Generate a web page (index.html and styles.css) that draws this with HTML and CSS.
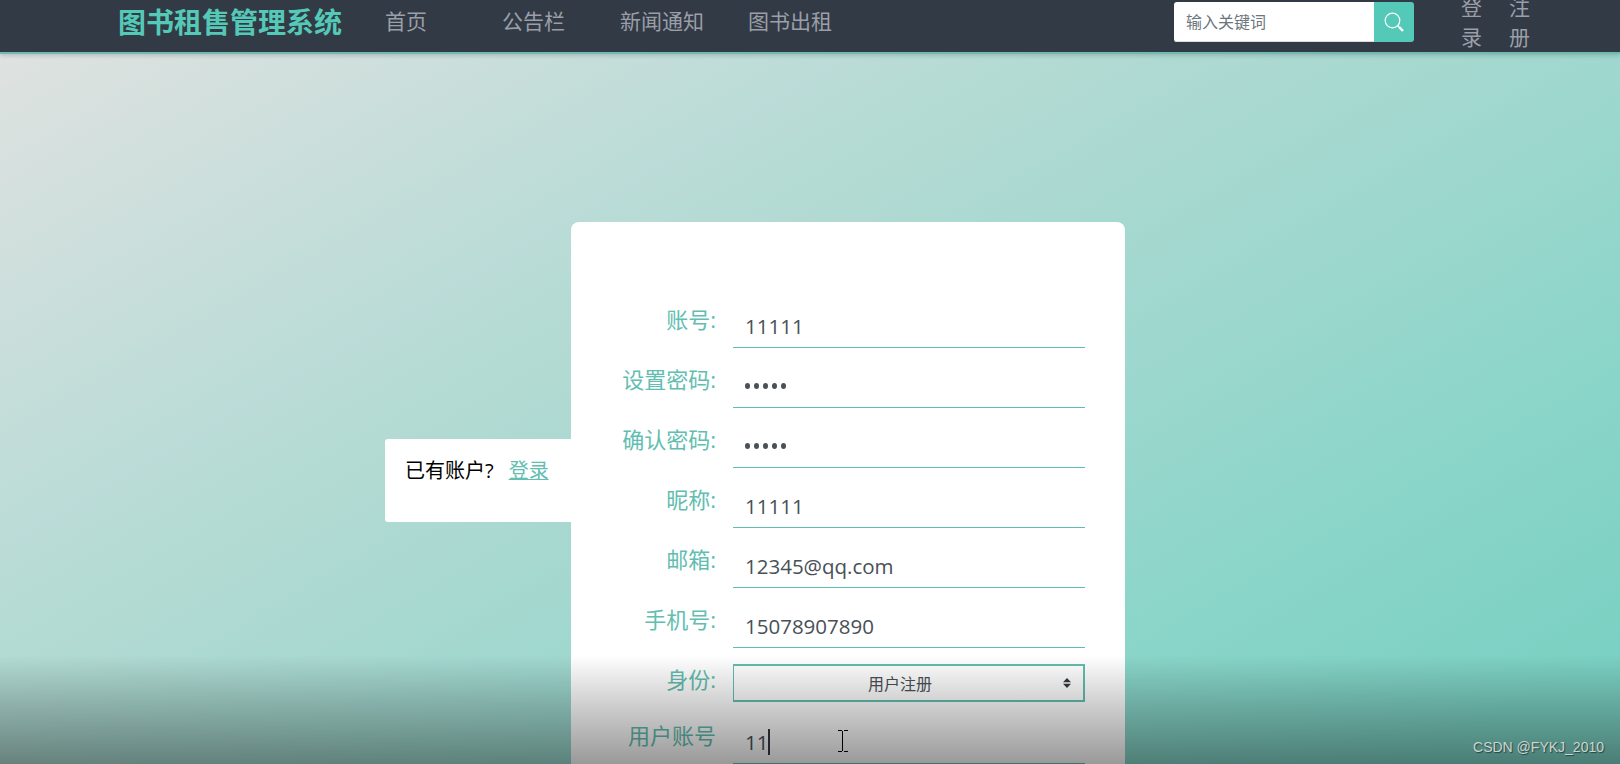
FILE: index.html
```
<!DOCTYPE html>
<html lang="zh-CN">
<head>
  <meta charset="UTF-8" />
  <meta name="viewport" content="width=device-width, initial-scale=1.0"/>
  <title>图书租售管理系统</title>
  <link rel="stylesheet" href="styles.css">
</head>
<body>

  <header class="top-bar">
    <a class="logo" href="#">图书租售管理系统</a>
    <nav class="menu">
      <a class="item-home" href="#">首页</a>
      <a class="item-board" href="#">公告栏</a>
      <a class="item-news" href="#">新闻通知</a>
      <a href="#">图书出租</a>
    </nav>
    <div class="search">
      <input type="text" placeholder="输入关键词">
      <button type="button" aria-label="搜索">
        <svg width="20" height="20" viewBox="0 0 20 20" fill="none" stroke="#fff">
          <circle cx="8.5" cy="8.5" r="7.3" stroke-width="1.2"/>
          <path d="M13.6 13.6L15.4 15.4" stroke-width="1.4"/>
          <path d="M15.2 15.2L19 19" stroke-width="2.4"/>
        </svg>
      </button>
    </div>
    <div class="user-links">
      <a href="#">登录</a>
      <a href="#">注册</a>
    </div>
  </header>

  <main>
    <div class="login-tip">
      <span>已有账户?</span>
      <a href="#">登录</a>
    </div>

    <form class="card">
      <div class="row">
        <label>账号:</label>
        <div class="field">11111</div>
      </div>
      <div class="row">
        <label>设置密码:</label>
        <div class="field password"><i></i><i></i><i></i><i></i><i></i></div>
      </div>
      <div class="row">
        <label>确认密码:</label>
        <div class="field password"><i></i><i></i><i></i><i></i><i></i></div>
      </div>
      <div class="row">
        <label>昵称:</label>
        <div class="field">11111</div>
      </div>
      <div class="row">
        <label>邮箱:</label>
        <div class="field">12345@qq.com</div>
      </div>
      <div class="row">
        <label>手机号:</label>
        <div class="field">15078907890</div>
      </div>
      <div class="row row-select">
        <label>身份:</label>
        <div class="select">
          <span>用户注册</span>
          <svg width="8" height="10" viewBox="0 0 8 10" fill="#343a40">
            <path d="M4 0L8 4.2H0zM4 10L0 5.8H8z"/>
          </svg>
        </div>
      </div>
      <div class="row row-last">
        <label>用户账号</label>
        <div class="field">11<span class="caret"></span></div>
      </div>
    </form>
  </main>

  <div class="shade"></div>
  <svg class="cursor" width="10" height="22" viewBox="0 0 10 22" fill="none" stroke="#000">
    <path d="M0 .5H4M6 .5H10M4.5 1V21M0 21.5H4M6 21.5H10"/>
  </svg>
  <div class="watermark">CSDN @FYKJ_2010</div>

</body>
</html>
```

FILE: styles.css
```
* { box-sizing: border-box; }
html, body {
  margin: 0; padding: 0;
  height: 764px;
  overflow: hidden;
}
body {
  position: relative;
  font-family: 'Open Sans', 'Noto Sans CJK SC', sans-serif;
  color: #495057;
  background: linear-gradient(150deg, #e0e2e0 2%, #bcdcd8 31%, #b2dad3 40%, #9bd7cd 62%, #8bd5c9 76%, #7bd1c3 93%);
}
a { text-decoration: none; }

/* header */
.top-bar {
  height: 54px;
  display: flex;
  align-items: flex-start;
  padding-left: 118px;
  background-color: #323a45;
  border-bottom: 2px solid #6fbab1;
  box-shadow: 0 2px 4px rgba(0, 0, 0, 0.15);
}
.logo {
  width: 267px;
  font-size: 28px;
  font-weight: bold;
  line-height: 44px;
  color: #55c9b7;
}
.menu {
  width: 789px;
  display: flex;
}
.menu a {
  font-size: 21px;
  line-height: 43px;
  color: #9a9fa8;
}
.item-home { width: 117px; }
.item-board { width: 118px; }
.item-news { width: 128px; }
.search {
  display: flex;
  width: 240px;
  height: 40px;
  margin-top: 2px;
  border-radius: 3px;
  overflow: hidden;
}
.search input {
  width: 200px;
  padding: 0 12px;
  border: none;
  border-bottom: 1px solid #ddd;
  font-family: inherit;
  font-size: 16px;
}
.search input::placeholder { color: #6c757d; }
.search button {
  width: 40px;
  padding: 0;
  border: none;
  background-color: #55c9b7;
  display: flex;
  align-items: center;
  justify-content: center;
}
.user-links {
  display: flex;
  gap: 27px;
  margin: -8px 0 0 47px;
}
.user-links a {
  width: 21px;
  font-size: 21px;
  line-height: 30px;
  word-break: break-all;
  color: #9a9fa8;
}

/* register form */
main {
  display: flex;
  align-items: flex-start;
  padding: 168px 0 0 385px;
}
.login-tip {
  width: 186px;
  height: 83px;
  margin-top: 217px;
  padding: 16px 0 0 20px;
  display: flex;
  justify-content: flex-start;
  gap: 15px;
  background-color: #fff;
  border-radius: 3px 0 0 3px;
  font-size: 20px;
  line-height: 32px;
  color: #000;
}
.login-tip a {
  color: #62beb0;
  text-decoration: underline;
  text-decoration-thickness: 1px;
  text-underline-offset: 1px;
}
.card {
  width: 554px;
  height: 542px;
  padding: 84px 40px 0 0;
  background-color: #fff;
  border-radius: 8px 8px 0 0;
}
.row {
  height: 60px;
  display: flex;
  justify-content: flex-end;
}
.row label {
  padding-right: 17px;
  font-size: 22px;
  line-height: 26px;
  color: #62beb0;
}
.field {
  width: 352px;
  height: 42px;
  padding: 0 0 1px 12px;
  display: flex;
  align-items: center;
  font-size: 20.5px;
  border-bottom: 1px solid #62beb0;
}
.password { gap: 4px; }
.password i {
  width: 5px;
  height: 6px;
  border-radius: 50%;
  background-color: #495057;
}
.row-select { height: 56px; }
.select {
  width: 352px;
  height: 38px;
  margin-top: -2px;
  padding: 0 12px 1px 0;
  display: flex;
  align-items: center;
  border: 2px solid #62beb0;
  border-left-width: 1px;
  font-size: 16px;
}
.select span {
  flex: 1;
  text-align: center;
  padding-left: 3px;
}
.row-last { height: 42px; }
.caret {
  width: 2px;
  height: 26px;
  background-color: #343a40;
}

/* overlays */
.shade {
  position: absolute;
  left: 0; right: 0; bottom: 0;
  height: 109px;
  background: linear-gradient(rgba(0, 0, 0, 0), rgba(0, 0, 0, 0.19) 45%, rgba(0, 0, 0, 0.4));
}
.cursor {
  position: absolute;
  left: 838px;
  top: 730px;
}
.watermark {
  position: absolute;
  right: 16px;
  bottom: 9px;
  font-family: 'Liberation Sans', Arial, sans-serif;
  font-size: 14px;
  line-height: 16px;
  color: #cbd5d2;
  text-shadow: 1px 1px 1px rgba(0, 0, 0, 0.5);
}
```
